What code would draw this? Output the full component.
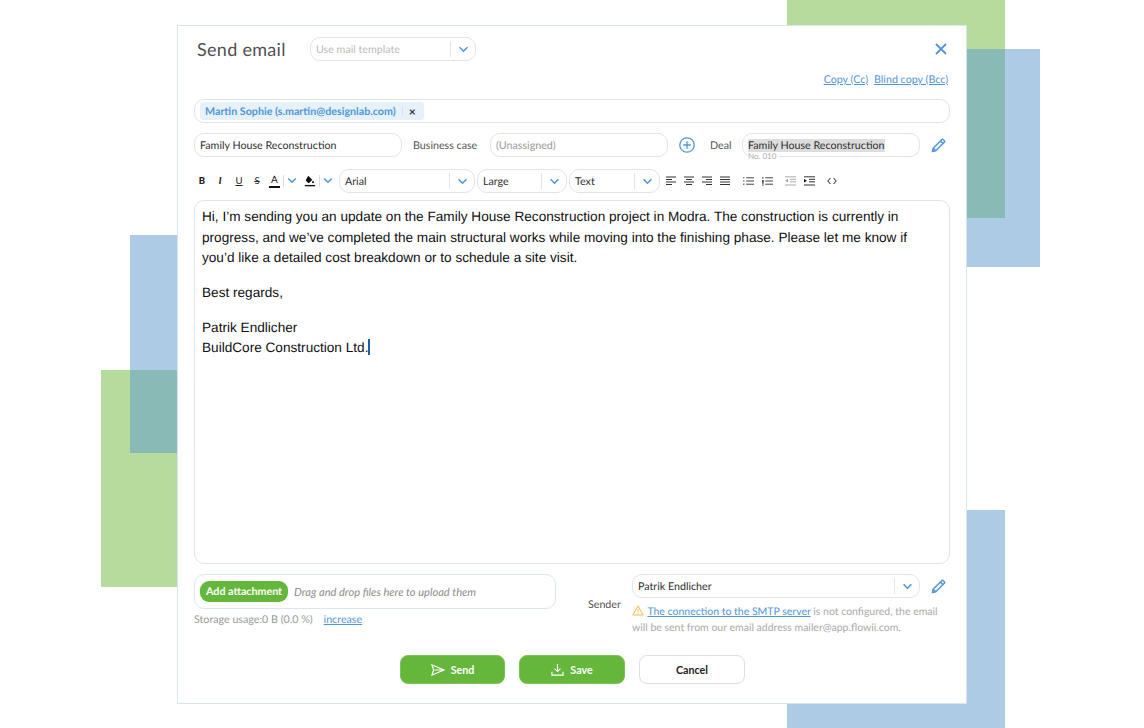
<div class="stage">
  <div class="shape green gr1"></div>
  <div class="shape blue bl1"></div>
  <div class="shape green gr2"></div>
  <div class="shape blue bl2"></div>
  <div class="shape blue bl3"></div>

  <section class="modal">
    <header class="head">
      <h1>Send email</h1>
      <div class="select tpl">
        <span class="ph">Use mail template</span>
        <span class="caret"><svg viewBox="0 0 12 8" width="11" height="7"><path d="M1.5 1.5 6 6l4.5-4.5" /></svg></span>
      </div>
      <svg class="close" viewBox="0 0 12 12" width="12" height="12"><path d="M1 1l10 10M11 1 1 11" /></svg>
    </header>

    <div class="links"><a href="#a">Copy (Cc)</a><a href="#b">Blind copy (Bcc)</a></div>

    <div class="field to">
      <span class="chip"><b>Martin Sophie (s.martin@designlab.com)</b><i></i><span class="x">×</span></span>
    </div>

    <div class="row">
      <div class="field subject">Family House Reconstruction</div>
      <span class="lbl bc">Business case</span>
      <div class="field biz">(Unassigned)</div>
      <svg class="plus" viewBox="0 0 16 16" width="16" height="16"><circle cx="8" cy="8" r="7.2"/><path d="M8 4.2v7.6M4.2 8h7.6"/></svg>
      <span class="lbl deal">Deal</span>
      <div class="field dealf"><mark>Family House Reconstruction</mark><small>No. 010</small></div>
      <svg class="pen" viewBox="0 0 16 16" width="15" height="15"><path d="M1.5 14.5l.8-3.6L11.4 1.8a1.2 1.2 0 0 1 1.7 0l1.1 1.1a1.2 1.2 0 0 1 0 1.7L5.1 13.7zM10 3.2l2.8 2.8M2.3 10.9l2.8 2.8"/></svg>
    </div>

    <div class="toolbar">
      <span class="tb b">B</span>
      <span class="tb i">I</span>
      <span class="tb u">U</span>
      <span class="tb s">S</span>
      <span class="tb a">A</span>
      <span class="div"></span>
      <svg class="mini" viewBox="0 0 12 8" width="10" height="7"><path d="M1.5 1.5 6 6l4.5-4.5" /></svg>
      <svg class="fill" viewBox="0 0 14 14" width="12" height="14"><path class="f" d="M5 1l4.6 4.6-3.6 3.6a.8.8 0 0 1-1.1 0L2.3 6.6a.8.8 0 0 1 0-1.1zM10.5 6.5c.7 1 1.1 1.6 1.1 2.1a1.1 1.1 0 0 1-2.2 0c0-.5.4-1.1 1.1-2.1z"/><rect class="f" x="1" y="11.6" width="12" height="1.6"/></svg>
      <span class="div"></span>
      <svg class="mini m2" viewBox="0 0 12 8" width="10" height="7"><path d="M1.5 1.5 6 6l4.5-4.5" /></svg>
      <div class="select font"><span>Arial</span><span class="caret"><svg viewBox="0 0 12 8" width="11" height="7"><path d="M1.5 1.5 6 6l4.5-4.5" /></svg></span></div>
      <div class="select size"><span>Large</span><span class="caret"><svg viewBox="0 0 12 8" width="11" height="7"><path d="M1.5 1.5 6 6l4.5-4.5" /></svg></span></div>
      <div class="select kind"><span>Text</span><span class="caret"><svg viewBox="0 0 12 8" width="11" height="7"><path d="M1.5 1.5 6 6l4.5-4.5" /></svg></span></div>
      <div class="ticons">
        <svg viewBox="0 0 10 10" width="10" height="10"><path d="M0 1h10M0 3.5h6M0 6h10M0 8.5h6"/></svg>
        <svg viewBox="0 0 10 10" width="10" height="10"><path d="M0 1h10M2 3.5h6M0 6h10M2 8.5h6"/></svg>
        <svg viewBox="0 0 10 10" width="10" height="10"><path d="M0 1h10M4 3.5h6M0 6h10M4 8.5h6"/></svg>
        <svg viewBox="0 0 10 10" width="10" height="10"><path d="M0 1h10M0 3.5h10M0 6h10M0 8.5h10"/></svg>
        <svg class="g1" viewBox="0 0 12 10" width="11" height="10"><path d="M3.5 1.5H12M3.5 5H12M3.5 8.5H12M0 1.5h1.6M0 5h1.6M0 8.5h1.6"/></svg>
        <svg viewBox="0 0 12 10" width="11" height="10"><path d="M3.5 1.5H12M3.5 5H12M3.5 8.5H12M1 .5v2M.2 4.5h1.6v1H.2v1h1.6M.2 8h1.6M.2 9.5h1.6"/></svg>
        <svg class="g2 dim" viewBox="0 0 11 10" width="11" height="10"><path d="M0 .8h11M5 3.3h6M5 5.8h6M0 9h11"/><path class="f" d="M3 3 0 4.8l3 1.8z"/></svg>
        <svg viewBox="0 0 11 10" width="11" height="10"><path d="M0 .8h11M5 3.3h6M5 5.8h6M0 9h11"/><path class="f" d="M0 3l3 1.8-3 1.8z"/></svg>
        <svg class="g3" viewBox="0 0 10 8" width="10" height="8"><path d="M3.4 1 .8 4l2.6 3M6.6 1l2.6 3-2.6 3"/></svg>
      </div>
    </div>

    <div class="editor">
      <p>Hi, I’m sending you an update on the Family House Reconstruction project in Modra. The construction is currently in progress, and we’ve completed the main structural works while moving into the finishing phase. Please let me know if you’d like a detailed cost breakdown or to schedule a site visit.</p>
      <p>Best regards,</p>
      <p>Patrik Endlicher<br />BuildCore Construction Ltd.<span class="cursor"></span></p>
    </div>

    <div class="bottom">
      <div class="attach-col">
        <div class="attach">
          <span class="add">Add attachment</span>
          <em>Drag and drop files here to upload them</em>
        </div>
        <div class="storage"><span>Storage usage:0 B (0.0 %)</span><a href="#c">increase</a></div>
      </div>
      <span class="lbl sender">Sender</span>
      <div class="sender-col">
        <div class="sender-row">
          <div class="select who"><span>Patrik Endlicher</span><span class="caret"><svg viewBox="0 0 12 8" width="11" height="7"><path d="M1.5 1.5 6 6l4.5-4.5" /></svg></span></div>
          <svg class="pen" viewBox="0 0 16 16" width="15" height="15"><path d="M1.5 14.5l.8-3.6L11.4 1.8a1.2 1.2 0 0 1 1.7 0l1.1 1.1a1.2 1.2 0 0 1 0 1.7L5.1 13.7zM10 3.2l2.8 2.8M2.3 10.9l2.8 2.8"/></svg>
        </div>
        <p class="warn">
          <svg viewBox="0 0 12 11" width="12" height="11"><path d="M6 1 .8 10h10.4zM6 4.2v3M6 8.2v.8"/></svg>
          <a href="#d">The connection to the SMTP server</a> is not configured, the email will be sent from our email address mailer@app.flowii.com.
        </p>
      </div>
    </div>

    <div class="actions">
      <button class="go send"><svg viewBox="0 0 14 12" width="14" height="12"><path d="M1 1l12 5-12 5 1.6-5zM2.6 6H13"/></svg>Send</button>
      <button class="go"><svg viewBox="0 0 14 14" width="13" height="13"><path d="M7 1v8M3.8 6 7 9.2 10.2 6M1 9.5V13h12V9.5"/></svg>Save</button>
      <button class="cancel">Cancel</button>
    </div>
  </section>
</div>

<style>
  :global(body) { margin: 0; background: #fff; }
  .stage {
    position: relative;
    width: 1144px;
    height: 728px;
    overflow: hidden;
    font-family: Lato, "Open Sans", sans-serif;
    font-size: 10.7px;
    color: #2f2f2f;
    padding-top: 25px;
    box-sizing: border-box;
    text-rendering: geometricPrecision;
  }
  .shape { position: absolute; width: 218px; height: 218px; }
  .green { background: #b5dc9d; }
  .blue { background: rgba(97, 154, 206, .514); }
  .gr1 { left: 787px; top: 0; }
  .bl1 { left: 822px; top: 49px; }
  .gr2 { left: 101px; top: 370px; height: 217px; }
  .bl2 { left: 130px; top: 235px; }
  .bl3 { left: 787px; top: 510px; }

  .modal {
    position: relative;
    margin-left: 177px;
    width: 790px;
    height: 679px;
    box-sizing: border-box;
    background: #fff;
    border: 1px solid #d5e5f2;
    padding: 11px 16px 0;
  }
  .head { display: flex; align-items: center; height: 24px; }
  h1 { margin: 0 24px 0 3px; font-size: 18px; font-weight: 400; color: #505050; letter-spacing: .3px; width: 89px; white-space: nowrap; }
  .close { margin-left: auto; margin-right: 3px; fill: none; stroke: #5096d8; stroke-width: 1.8; }

  .select, .field {
    box-sizing: border-box;
    height: 24px;
    border: 1px solid #e0e4e8;
    border-radius: 10px;
    display: flex;
    align-items: center;
    background: #fff;
    padding-left: 5px;
  }
  .select { justify-content: space-between; }
  .caret {
    height: 16px;
    width: 24px;
    border-left: 1px solid #e2e5e8;
    display: flex;
    align-items: center;
    justify-content: center;
  }
  .caret svg, .mini { fill: none; stroke: #5096d8; stroke-width: 1.8; }
  .tpl { width: 166px; }
  .ph { color: #bbb; }

  .links { display: flex; justify-content: flex-end; gap: 6px; margin: 13px 2px 0 0; height: 12px; line-height: 12px; }
  a { color: #5096d8; text-decoration: underline; }

  .to { margin-top: 13px; width: 756px; }
  .chip { display: flex; align-items: center; height: 18px; padding: 0 8px 0 5px; background: #e6f1fb; border-radius: 3px; color: #5096d8; }
  .chip b { font-weight: 700; }
  .chip i { width: 1px; height: 10px; background: #d5e0ea; margin: 0 6px; }
  .chip .x { color: #333; font-weight: 700; font-size: 12px; }

  .row { display: flex; align-items: center; margin-top: 10px; height: 24px; }
  .subject { width: 208px; }
  .lbl { color: #555; }
  .bc { margin-left: 11px; width: 77px; white-space: nowrap; }
  .biz { width: 178px; color: #999; }
  .plus { margin-left: 11px; fill: none; stroke: #5096d8; stroke-width: 1.3; }
  .deal { margin-left: 15px; width: 32px; }
  .dealf { width: 178px; position: relative; }
  mark { background: #ddd; color: #2f2f2f; }
  small { position: absolute; left: 5px; bottom: -5px; font-size: 8px; line-height: 9px; color: #aaa; background: #fff; padding-right: 3px; }
  .pen { margin-left: 11px; fill: none; stroke: #5096d8; stroke-width: 1.6; stroke-linejoin: round; flex: none; }

  .toolbar { display: flex; align-items: center; height: 24px; margin-top: 12px; }
  .tb { width: 18px; text-align: center; font-size: 9.5px; color: #222; flex: none; }
  .b { font-weight: 900; width: 16px; }
  .i { font-style: italic; font-weight: 900; width: 20px; }
  .u { text-decoration: underline; }
  .s { text-decoration: line-through; }
  .a { width: 11px; margin-left: 3px; font-size: 10px; border-bottom: 2px solid #111; line-height: 11px; }
  .div { width: 1px; height: 12px; background: #ddd; margin: 0 3px; }
  .mini { margin-right: 7px; margin-top: -2px; }
  .m2 { margin-right: 6px; }
  .f { fill: #111; stroke: none; }
  .font { width: 136px; margin-right: 2px; }
  .size { width: 90px; margin-right: 2px; }
  .kind { width: 91px; }
  .ticons { display: flex; align-items: center; gap: 8px; margin-left: 6px; }
  .ticons svg { fill: none; stroke: #333; stroke-width: 1; flex: none; }
  .g1 { margin-left: 5px; }
  .g2 { margin-left: 4px; }
  .g3 { margin-left: 4px; stroke: #222 !important; }
  .dim { opacity: .4; }

  .editor {
    box-sizing: border-box;
    margin-top: 7px;
    width: 756px;
    height: 364px;
    border: 1px solid #e0e4e8;
    border-radius: 10px;
    padding: 6px 7px;
    font-family: "Liberation Sans", Arial, sans-serif;
    font-size: 13.62px;
    line-height: 20.5px;
    color: #111;
  }
  .editor p { margin: 0 0 14.4px; }
  .cursor { display: inline-block; width: 1.5px; height: 16px; background: #1b5fa8; vertical-align: -3px; }

  .bottom { display: flex; margin-top: 10px; height: 66px; }
  .attach-col { width: 363px; }
  .attach { box-sizing: border-box; width: 362px; height: 35px; border: 1px solid #dde6ee; border-radius: 10px; display: flex; align-items: center; padding-left: 5px; }
  .add { background: #64b73a; color: #fff; font-weight: 700; height: 21px; line-height: 21px; padding: 0 6px; border-radius: 9px; margin-right: 6px; }
  em { color: #8d8d8d; font-size: 11.1px; padding-top: 1px; }
  .storage { display: flex; gap: 11px; margin-top: 4px; color: #999; }
  .sender { width: 44px; margin-left: 31px; margin-top: 24px; }
  .sender-col { width: 318px; }
  .sender-row { display: flex; align-items: center; }
  .who { width: 288px; }
  .warn { margin: 6px 0 0; color: #aaa; line-height: 16px; font-size: 10.5px; }
  .warn svg { fill: none; stroke: #f3b93f; stroke-width: 1; vertical-align: -1px; margin-right: 1px; }

  .actions { display: flex; justify-content: center; gap: 14px; margin-top: 15px; }
  button { font: inherit; box-sizing: border-box; width: 106px; height: 29px; border-radius: 8px; font-weight: 700; display: flex; align-items: center; justify-content: center; gap: 6px; }
  .go { background: #64b73a; border: 1px solid #7cc45a; color: #fff; }
  .send { width: 105px; margin-left: 1px; }
  .go svg { fill: none; stroke: #fff; stroke-width: 1.2; }
  .cancel { background: #fff; border: 1px solid #dcdfe4; color: #222; }
</style>
